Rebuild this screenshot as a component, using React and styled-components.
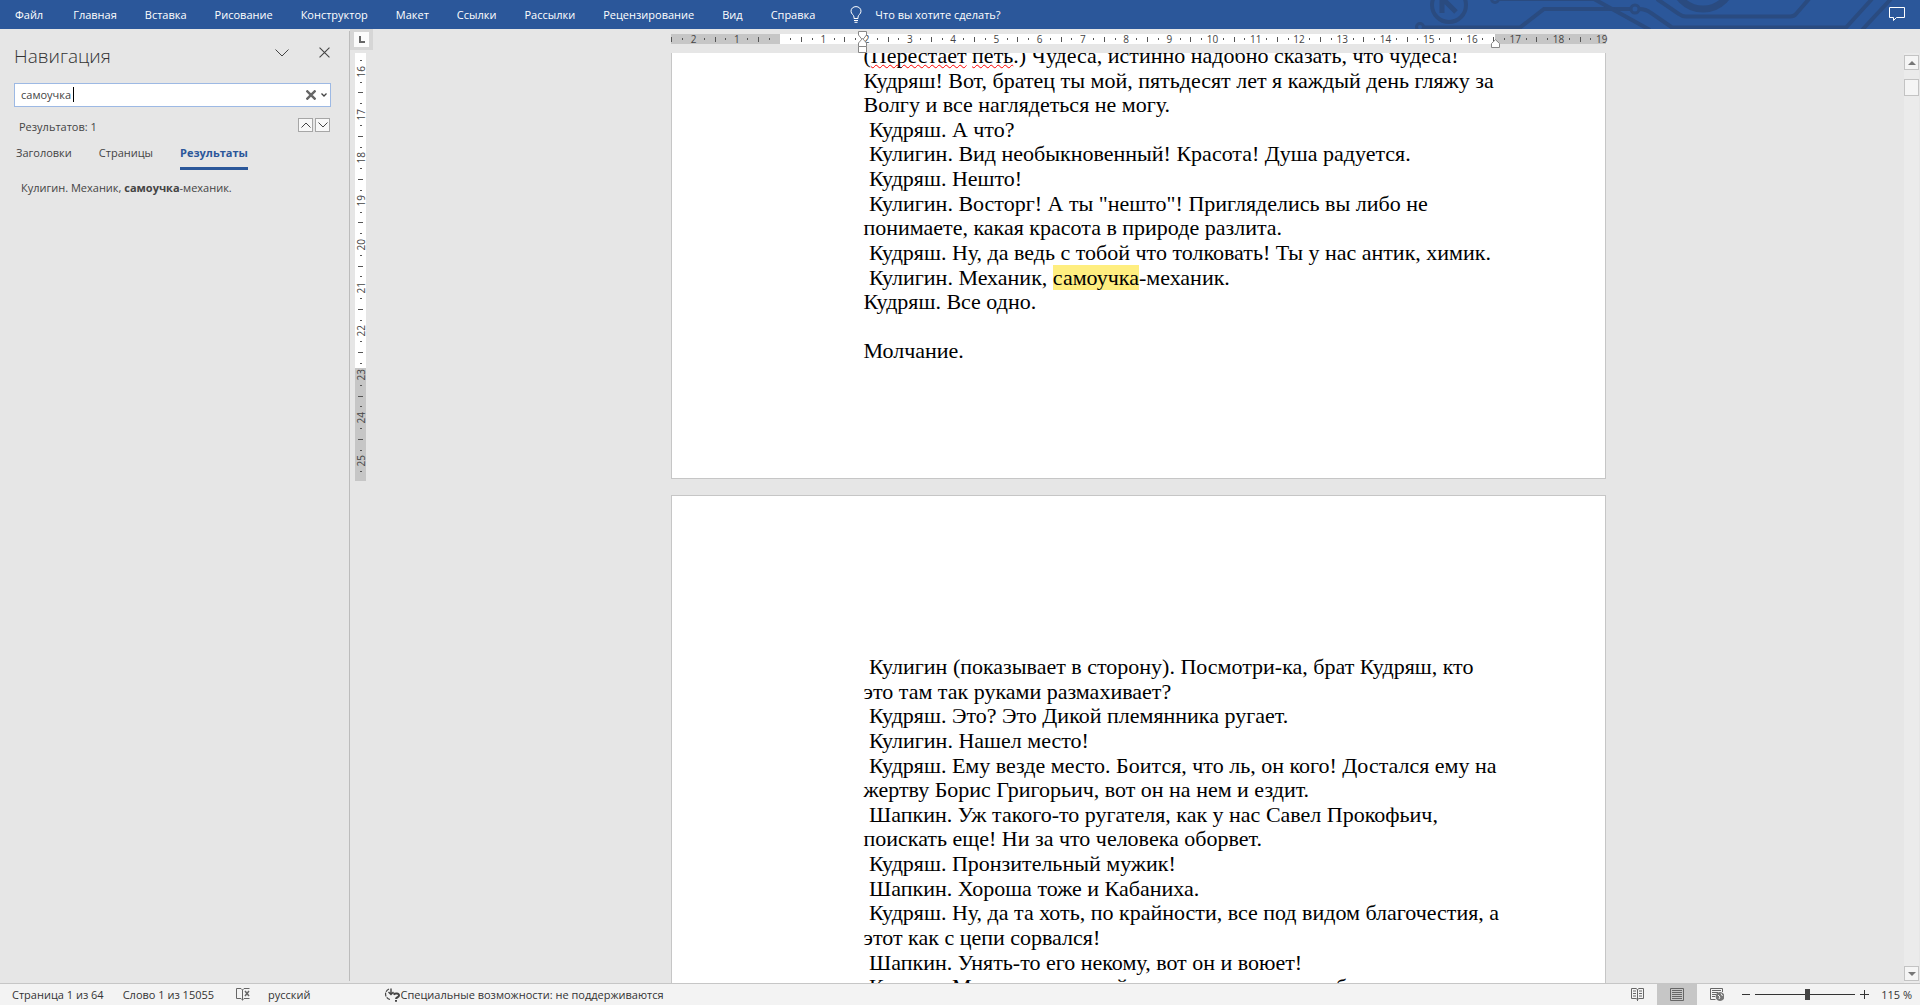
import React, { useState } from "react";
import styled, { createGlobalStyle, css } from "styled-components";

const Global = createGlobalStyle`
  *, *::before, *::after { box-sizing: border-box; }
  body { margin: 0; }
  button, input { font: inherit; color: inherit; }
  button { padding: 0; border: 0; background: none; cursor: pointer; }
  svg { display: block; flex: none; }
`;

const Shell = styled.div`
  display: grid;
  grid-template-rows: 29px minmax(0, 1fr) 22px;
  height: 100vh;
  overflow: hidden;
  background: #e6e6e6;
  color: #444;
  font: 11px/14px "Open Sans", "Noto Sans", sans-serif;
`;

/* Ribbon */
const Ribbon = styled.header`
  position: relative;
  display: flex;
  align-items: center;
  padding: 0 15px;
  overflow: hidden;
  background: #2b579a;
  color: #fff;
`;
const Circuit = styled.svg`
  position: absolute;
  top: 0;
  right: 0;
  fill: none;
  stroke: #2a4b80;
  stroke-width: 4;
`;
const RibbonTabs = styled.nav`
  display: flex;
  gap: 28px;
`;
const RibbonTab = styled.button`
  white-space: nowrap;
  &:first-child {
    margin-right: 2px;
  }
`;
const TellMe = styled.button`
  display: flex;
  align-items: center;
  gap: 13px;
  margin-left: 35px;
  white-space: nowrap;
`;
const CommentButton = styled.button`
  position: relative;
  margin-left: auto;
`;

/* Workspace */
const Workspace = styled.div`
  display: grid;
  grid-template-columns: 350px 23px minmax(0, 1fr) 17px;
  min-height: 0;
`;

const NavPane = styled.aside`
  margin: 2px 0;
  padding: 0 18px 0 14px;
  border-right: 1px solid #bcbcbc;
`;
const NavHeader = styled.div`
  display: flex;
  align-items: center;
  height: 52px;
  padding: 0 0 3px;
`;
const NavTitle = styled.h2`
  flex: 1;
  margin: 0;
  font-size: 19px;
  line-height: 26px;
  font-weight: 300;
  color: #333;
`;
const PaneButtons = styled.div`
  display: flex;
  gap: 28px;
`;
const PaneButton = styled.button`
  display: grid;
  place-items: center;
  width: 14px;
  height: 24px;
  margin-bottom: 6px;
`;
const SearchBox = styled.form`
  position: relative;
  display: flex;
  align-items: center;
  height: 24px;
  padding: 0 3px 0 6px;
  border: 1px solid #9db9e4;
  background: #fff;
`;
const SearchInput = styled.input`
  flex: 1;
  min-width: 0;
  height: 20px;
  padding: 0 0 2px;
  border: 0;
  outline: 0;
  background: none;
`;
const Caret = styled.span`
  position: absolute;
  left: 58px;
  top: 3px;
  width: 1px;
  height: 15px;
  background: #000;
`;
const SearchAction = styled.button`
  margin-left: 5px;
`;
const ResultRow = styled.div`
  display: flex;
  align-items: center;
  gap: 2px;
  height: 39px;
  padding: 0 1px 0 5px;
`;
const ResultCount = styled.span`
  flex: 1;
`;
const StepButton = styled.button`
  display: grid;
  place-items: center;
  width: 15px;
  height: 14px;
  margin-bottom: 3px;
  border: 1px solid #a6a6a6;
  background: #f8f8f8;
`;
const PaneTabs = styled.div`
  display: flex;
  gap: 27px;
  padding-left: 2px;
`;
const PaneTab = styled.button`
  padding: 0 0 7px;
  border-bottom: 3px solid transparent;
  ${(p) =>
    p.$active &&
    css`
      border-color: #2b579a;
      color: #2b579a;
      font-weight: 700;
    `}
`;
const ResultList = styled.ul`
  margin: 0;
  padding: 11px 0 0 7px;
  list-style: none;
`;
const ResultItem = styled.button`
  text-align: left;
`;

/* Rulers */
const VRulerColumn = styled.div`
  display: flex;
  flex-direction: column;
  align-items: flex-start;
  gap: 3px;
`;
const TabSelector = styled.button`
  display: grid;
  place-items: center;
  width: 23px;
  height: 21px;
  background: #d6d6d6;
`;
const TabSelectorFace = styled.span`
  display: grid;
  place-items: center;
  width: 15px;
  height: 15px;
  background: #fbfbfb;
`;
const Scale = styled.div`
  display: flex;
  color: #444;
  font-size: 10px;
  line-height: 10px;
  ${(p) =>
    p.$vertical
      ? css`
          flex-direction: column;
          width: 11px;
          height: 428px;
          margin-left: 5px;
          padding: 2px 0 4px;
          background: linear-gradient(#fff 315px, #c6c6c6 315px);
        `
      : css`
          height: 10px;
          background: linear-gradient(
            90deg,
            #c6c6c6 109px,
            #fff 109px calc(100% - 111px),
            #c6c6c6 calc(100% - 111px)
          );
        `}
`;
const Marks = styled.div`
  display: flex;
  flex: 1;
  flex-direction: ${(p) => (p.$vertical ? "column" : "row")};
  margin: ${(p) => (p.$vertical ? "0" : "0 -2px 0 -4px")};
`;
const Mark = styled.span`
  display: flex;
  flex: 1 1 0;
  align-items: center;
  justify-content: center;
  min-width: 0;
  min-height: 0;
`;
const ScaleNumber = styled.span`
  flex: none;
  ${(p) =>
    p.$vertical &&
    css`
      writing-mode: vertical-rl;
      transform: rotate(180deg);
    `}
`;
const Tick = styled.i`
  flex: none;
  background: #555;
  width: ${(p) => (p.$vertical ? (p.$long ? 5 : 2) : 1)}px;
  height: ${(p) => (p.$vertical ? 1 : p.$long ? 5 : 2)}px;
`;

/* Canvas */
const Canvas = styled.main`
  display: flex;
  flex-direction: column;
  align-items: center;
  min-height: 0;
  overflow: hidden;
`;
const RulerBar = styled.div`
  position: relative;
  flex: none;
  width: 935px;
  height: 24px;
  padding-top: 5px;
`;
const IndentMarker = styled.svg`
  position: absolute;
  top: ${(p) => p.$top}px;
  left: ${(p) => p.$left}px;
  fill: #fff;
  stroke: #888;
`;
const Pages = styled.div`
  display: flex;
  flex-direction: column;
  gap: 16px;
  flex: 1;
  min-height: 0;
  overflow: hidden;
`;
const Page = styled.article`
  display: flex;
  flex: none;
  flex-direction: column;
  justify-content: ${(p) => (p.$tail ? "flex-end" : "flex-start")};
  width: 935px;
  height: ${(p) => (p.$tail ? 426 : 1280)}px;
  padding: ${(p) => (p.$tail ? "0 110px 114px 192px" : "159px 110px 0 192px")};
  border: 1px solid #c6c6c6;
  border-top-width: ${(p) => (p.$tail ? 0 : 1)}px;
  overflow: hidden;
  background: #fff;
`;
const Prose = styled.div`
  color: #000;
  font-family: "Liberation Serif", "Times New Roman", serif;
  font-size: 22px;
  line-height: 1.12;
  white-space: pre;
`;
const Misspelled = styled.span`
  text-decoration: underline wavy #f00 1px;
  text-decoration-skip-ink: none;
  text-underline-offset: 1px;
`;
const Found = styled.mark`
  background: #ffee80;
  color: inherit;
`;

/* Scroll bar */
const ScrollBar = styled.div`
  display: flex;
  flex-direction: column;
  margin: 24px 1px 0;
  padding: 2px 0;
  background: #ebebeb;
`;
const ScrollButton = styled.button`
  display: grid;
  place-items: center;
  height: 15px;
  border: 1px solid #c3c3c3;
  background: #f5f5f5;
`;
const ScrollTrack = styled.div`
  flex: 1;
  padding-top: 9px;
`;
const ScrollThumb = styled.div`
  height: 17px;
  border: 1px solid #c3c3c3;
  background: #f5f5f5;
`;

/* Status bar */
const StatusBar = styled.footer`
  display: flex;
  align-items: center;
  padding: 0 8px 0 12px;
  border-top: 1px solid #c6c6c6;
  background: #f3f3f3;
  color: #333;
  white-space: nowrap;
`;
const StatusItem = styled.button`
  display: flex;
  align-items: center;
  margin-right: ${(p) => p.$after || 0}px;
`;
const Views = styled.div`
  display: flex;
  align-self: stretch;
  margin: 0 4px 0 auto;
`;
const ViewButton = styled.button`
  display: grid;
  place-items: center;
  width: 40px;
  background: ${(p) => (p.$active ? "#c6c6c6" : "transparent")};
`;
const ZoomButton = styled.button`
  display: grid;
  place-items: center;
  width: 9px;
  height: 16px;
`;
const ZoomSlider = styled.input`
  appearance: none;
  width: 100px;
  height: 11px;
  margin: 0 5px;
  background: linear-gradient(#333, #333) center / 100% 1px no-repeat;
  &::-webkit-slider-thumb {
    appearance: none;
    width: 5px;
    height: 11px;
    background: #444;
  }
`;
const ZoomValue = styled.button`
  width: 43px;
  text-align: right;
`;

function Ruler({ from, to, vertical, hidden = [] }) {
  const marks = [];
  for (let q = from * 4; q <= to * 4; q += 1) marks.push(q);
  return (
    <Scale $vertical={vertical} aria-hidden="true">
      <Marks $vertical={vertical}>
        {marks.map((q) => (
          <Mark key={q}>
            {q % 4 !== 0 ? (
              <Tick $vertical={vertical} $long={q % 2 === 0} />
            ) : (
              !hidden.includes(q / 4) && (
                <ScaleNumber $vertical={vertical}>{Math.abs(q / 4)}</ScaleNumber>
              )
            )}
          </Mark>
        ))}
      </Marks>
    </Scale>
  );
}

const Chevron = ({ w, h, up, stroke = 1 }) => (
  <svg width={w} height={h} viewBox={`0 0 ${w} ${h}`} fill="none" stroke="#444" strokeWidth={stroke}>
    <path d={up ? `M.5 ${h - 0.5}L${w / 2} 1L${w - 0.5} ${h - 0.5}` : `M.5 .5L${w / 2} ${h - 1}L${w - 0.5} .5`} />
  </svg>
);
const Cross = ({ size, stroke, color = "#444" }) => (
  <svg width={size} height={size} viewBox="0 0 10 10" fill="none" stroke={color} strokeWidth={stroke}>
    <path d="M.5 .5L9.5 9.5M9.5 .5L.5 9.5" />
  </svg>
);
const Arrow = ({ up }) => (
  <svg width="8" height="4" viewBox="0 0 8 4" fill="#777">
    <path d={up ? "M0 4L4 0L8 4Z" : "M0 0L4 4L8 0Z"} />
  </svg>
);

const RIBBON = [
  "Файл", "Главная", "Вставка", "Рисование", "Конструктор", "Макет",
  "Ссылки", "Рассылки", "Рецензирование", "Вид", "Справка",
];
const PANE_TABS = ["Заголовки", "Страницы", "Результаты"];

const SECOND_PAGE = ` Кулигин (показывает в сторону). Посмотри-ка, брат Кудряш, кто
это там так руками размахивает?
 Кудряш. Это? Это Дикой племянника ругает.
 Кулигин. Нашел место!
 Кудряш. Ему везде место. Боится, что ль, он кого! Достался ему на
жертву Борис Григорьич, вот он на нем и ездит.
 Шапкин. Уж такого-то ругателя, как у нас Савел Прокофьич,
поискать еще! Ни за что человека оборвет.
 Кудряш. Пронзительный мужик!
 Шапкин. Хороша тоже и Кабаниха.
 Кудряш. Ну, да та хоть, по крайности, все под видом благочестия, а
этот как с цепи сорвался!
 Шапкин. Унять-то его некому, вот он и воюет!
 Кудряш. Мало у нас парней-то на мою стать, а то бы мы его`;

export default function App() {
  const [query, setQuery] = useState("самоучка");
  const [tab, setTab] = useState("Результаты");
  const [zoom, setZoom] = useState(115);

  return (
    <Shell>
      <Global />
      <Ribbon>
        <Circuit width="520" height="29" viewBox="0 0 520 29" aria-hidden="true">
          <circle cx="49" cy="5" r="17" />
          <path d="M42 -1V13M44 0L56 12" strokeWidth="5" />
          <circle cx="20" cy="27" r="3.5" strokeWidth="3" />
          <path d="M24 27.5H120L144 9H231" />
          <circle cx="235" cy="9" r="4" strokeWidth="3" />
          <circle cx="95" cy="-1" r="3.5" strokeWidth="3" />
          <path d="M99 -1H194L250 30M239 9Q246 9 251 13L272 27.5H446L472 -1" />
          <path d="M257 -1L279 14Q282 16.500 286 16.500H390Q394 16.500 396 14L409 -1M462 30L491 -1" />
          <circle cx="303" cy="-21" r="30" strokeWidth="7" />
        </Circuit>
        <RibbonTabs>
          {RIBBON.map((name) => (
            <RibbonTab key={name} type="button">{name}</RibbonTab>
          ))}
        </RibbonTabs>
        <TellMe type="button">
          <svg width="12" height="17" viewBox="0 0 12 17" fill="none" stroke="#fff">
            <path d="M4 12.500V11C4 9 1 8 1 5.200C1 2.500 3.200 .6 6 .6S11 2.500 11 5.200C11 8 8 9 8 11V12.500ZM4 14.500H8M4.500 16.300H7.500" />
          </svg>
          Что вы хотите сделать?
        </TellMe>
        <CommentButton type="button" aria-label="Примечания">
          <svg width="16" height="15" viewBox="0 0 16 15" fill="none" stroke="#fff">
            <path d="M.5 .5H15.500V10.500H7.500L4.500 13.500V10.500H.5Z" />
          </svg>
        </CommentButton>
      </Ribbon>

      <Workspace>
        <NavPane>
          <NavHeader>
            <NavTitle>Навигация</NavTitle>
            <PaneButtons>
              <PaneButton type="button" aria-label="Параметры области"><Chevron w={14} h={8} /></PaneButton>
              <PaneButton type="button" aria-label="Закрыть"><Cross size={11} stroke={1} /></PaneButton>
            </PaneButtons>
          </NavHeader>
          <SearchBox onSubmit={(e) => e.preventDefault()}>
            <SearchInput
              aria-label="Поиск в документе"
              value={query}
              onChange={(e) => setQuery(e.target.value)}
            />
            <Caret />
            <SearchAction type="button" aria-label="Очистить" onClick={() => setQuery("")}>
              <Cross size={10} stroke={2.4} color="#666" />
            </SearchAction>
            <SearchAction type="button" aria-label="Параметры поиска"><Chevron w={6} h={4} stroke={1.3} /></SearchAction>
          </SearchBox>
          <ResultRow>
            <ResultCount>Результатов: 1</ResultCount>
            <StepButton type="button" aria-label="Предыдущий"><Chevron w={10} h={6} up /></StepButton>
            <StepButton type="button" aria-label="Следующий"><Chevron w={10} h={6} /></StepButton>
          </ResultRow>
          <PaneTabs>
            {PANE_TABS.map((name) => (
              <PaneTab key={name} type="button" $active={name === tab} onClick={() => setTab(name)}>
                {name}
              </PaneTab>
            ))}
          </PaneTabs>
          <ResultList>
            <li>
              <ResultItem type="button">Кулигин. Механик, <b>самоучка</b>-механик.</ResultItem>
            </li>
          </ResultList>
        </NavPane>

        <VRulerColumn>
          <TabSelector type="button" aria-label="Тип табуляции">
            <TabSelectorFace>
              <svg width="6" height="7" viewBox="0 0 6 7" fill="none" stroke="#666" strokeWidth="2">
                <path d="M1 0V6H6" />
              </svg>
            </TabSelectorFace>
          </TabSelector>
          <Ruler vertical from={15.75} to={25.25} />
        </VRulerColumn>

        <Canvas>
          <RulerBar>
            <Ruler from={-2.5} to={19} hidden={[0]} />
            <IndentMarker $top={2} $left={187} width="9" height="22" viewBox="0 0 9 22">
              <path d="M.5 .5H8.500V4L4.500 9L.5 4Z" />
              <path d="M4.500 7.500L8.500 12V15.500H.5V12Z" />
              <path d="M.5 15.500H8.500V21.500H.5Z" />
            </IndentMarker>
            <IndentMarker $top={10} $left={820} width="9" height="9" viewBox="0 0 9 9">
              <path d="M4.500 .7L8.500 4.500V8.500H.5V4.500Z" />
            </IndentMarker>
          </RulerBar>
          <Pages>
            <Page $tail>
              <Prose>
                (<Misspelled>Перестает</Misspelled> <Misspelled>петь</Misspelled>
                {`.) Чудеса, истинно надобно сказать, что чудеса!
Кудряш! Вот, братец ты мой, пятьдесят лет я каждый день гляжу за
Волгу и все наглядеться не могу.
 Кудряш. А что?
 Кулигин. Вид необыкновенный! Красота! Душа радуется.
 Кудряш. Нешто!
 Кулигин. Восторг! А ты "нешто"! Пригляделись вы либо не
понимаете, какая красота в природе разлита.
 Кудряш. Ну, да ведь с тобой что толковать! Ты у нас антик, химик.
 Кулигин. Механик, `}
                <Found>самоучка</Found>
                {`-механик.
Кудряш. Все одно.

Молчание.`}
              </Prose>
            </Page>
            <Page>
              <Prose>{SECOND_PAGE}</Prose>
            </Page>
          </Pages>
        </Canvas>

        <ScrollBar>
          <ScrollButton type="button" aria-label="Вверх"><Arrow up /></ScrollButton>
          <ScrollTrack><ScrollThumb /></ScrollTrack>
          <ScrollButton type="button" aria-label="Вниз"><Arrow /></ScrollButton>
        </ScrollBar>
      </Workspace>

      <StatusBar>
        <StatusItem type="button" $after={19}>Страница 1 из 64</StatusItem>
        <StatusItem type="button" $after={22}>Слово 1 из 15055</StatusItem>
        <StatusItem type="button" $after={17} aria-label="Правописание">
          <svg width="15" height="13" viewBox="0 0 15 13" fill="none" stroke="#666">
            <path d="M6.500 12.500V2L5 .5H.5V10.500H5L6.500 12L8 10.500H13.500M6.500 2L8 .5H13.500" />
            <path d="M9 3L13 8M13 3L9 8" strokeWidth="1.500" />
          </svg>
        </StatusItem>
        <StatusItem type="button" $after={73}>русский</StatusItem>
        <StatusItem type="button">
          <svg width="17" height="14" viewBox="0 0 17 14" fill="none" stroke="#444">
            <path d="M5 1A5.500 5.500 0 0 0 6 11.500" strokeWidth="1.200" strokeDasharray="4 1" />
            <path d="M7 .5V6.500M4.500 4L7 6.500L9.500 4" strokeWidth="1.400" />
            <path d="M9.500 6.500C11 5 15 5 15 7.500C15 9.500 12 9 12 11M12 12V13.800" strokeWidth="2" />
          </svg>
          Специальные возможности: не поддерживаются
        </StatusItem>
        <Views>
          <ViewButton type="button" aria-label="Режим чтения">
            <svg width="13" height="13" viewBox="0 0 13 13" fill="none" stroke="#666">
              <path d="M6.500 1.500V13M6.500 1.500L5 .5H.5V10.500H5L6.500 11.500L8 10.500H12.500V.5H8ZM2 3H5M2 5.500H5M2 8H5M8 3H11M8 5.500H11M8 8H11" />
            </svg>
          </ViewButton>
          <ViewButton type="button" aria-label="Разметка страницы" $active>
            <svg width="14" height="13" viewBox="0 0 14 13" fill="none" stroke="#666">
              <path d="M.5 .5H13.500V12.500H.5ZM2 2.500H12M2 4.500H12M2 6.500H12M2 8.500H12M2 10.500H12" />
            </svg>
          </ViewButton>
          <ViewButton type="button" aria-label="Веб-документ">
            <svg width="14" height="13" viewBox="0 0 14 13" fill="none" stroke="#666">
              <path d="M5.500 11.500H.5V.5H12.500V4M2 2.500H11M2 4.500H8M2 6.500H6M2 8.500H5" />
              <circle cx="10" cy="8.500" r="4" fill="#777" stroke="#777" />
              <path d="M8 7L10 9L9 11M11 5.500L12.500 8" stroke="#f3f3f3" />
            </svg>
          </ViewButton>
        </Views>
        <ZoomButton type="button" aria-label="Уменьшить" onClick={() => setZoom(zoom - 5)}>
          <svg width="8" height="1" viewBox="0 0 8 1" fill="#333"><path d="M0 0H8V1H0Z" /></svg>
        </ZoomButton>
        <ZoomSlider
          type="range"
          min="10"
          max="210"
          value={zoom}
          aria-label="Масштаб"
          onChange={(e) => setZoom(Number(e.target.value))}
        />
        <ZoomButton type="button" aria-label="Увеличить" onClick={() => setZoom(zoom + 5)}>
          <svg width="9" height="9" viewBox="0 0 9 9" fill="#333"><path d="M4 0H5V4H9V5H5V9H4V5H0V4H4Z" /></svg>
        </ZoomButton>
        <ZoomValue type="button">{zoom} %</ZoomValue>
      </StatusBar>
    </Shell>
  );
}
